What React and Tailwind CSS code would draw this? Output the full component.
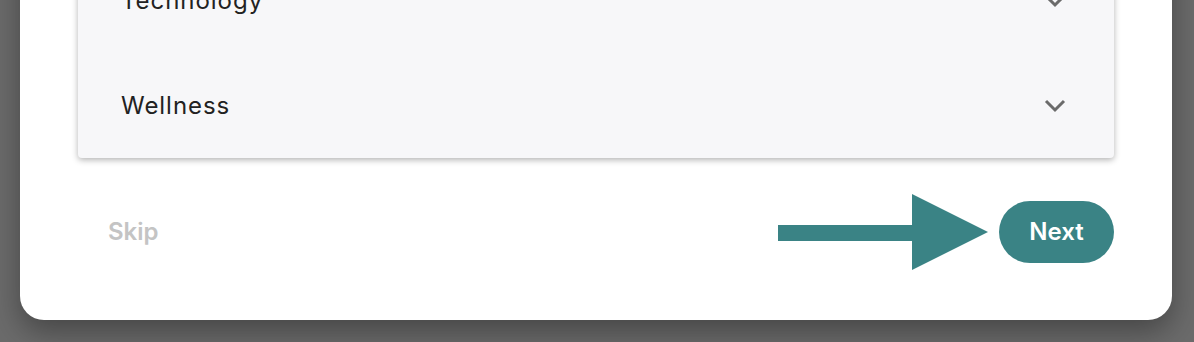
import React from 'react';

const Chevron = () => (
  <svg width="22" height="14" viewBox="0 0 22 14" fill="none" className="shrink-0">
    <polyline points="2,2 11,11 20,2" stroke="#6b6b6b" strokeWidth="3" />
  </svg>
);

const Row = ({ label }) => (
  <div className="flex h-[105px] items-center justify-between pl-[43px] pr-[48px]">
    <span className="text-[24px] tracking-[0.04em] text-[#222222]">{label}</span>
    <Chevron />
  </div>
);

const Arrow = () => (
  <svg width="210" height="76" viewBox="0 0 210 76" className="shrink-0">
    <rect x="0" y="31" width="135" height="16" fill="#3a8385" />
    <polygon points="134,0 210,38 134,76" fill="#3a8385" />
  </svg>
);

export default function App() {
  return (
    <div
      className="h-[342px] overflow-hidden bg-[#6b6b6b] pl-5 pr-[22px]"
      style={{ fontFamily: 'Inter, "Open Sans", sans-serif' }}
    >
      <div className="-mt-[52px] rounded-b-[24px] bg-white px-[58px] pb-[50px] shadow-[0_12px_30px_rgba(0,0,0,0.35)]">
        {/* Accordion */}
        <div className="rounded-b-[4px] bg-[#f7f7f9] shadow-[0_2px_6px_rgba(0,0,0,0.3)]">
          <Row label="Technology" />
          <Row label="Wellness" />
        </div>

        {/* Footer */}
        <div className="mt-[36px] flex items-center justify-between">
          <button className="ml-[30px] text-[24px] font-semibold text-[#c4c4c4]">Skip</button>
          <div className="flex items-center gap-[11px]">
            <Arrow />
            <button className="flex h-[62px] w-[115px] items-center justify-center rounded-full bg-[#3a8385] text-[24px] font-semibold text-white">
              Next
            </button>
          </div>
        </div>
      </div>
    </div>
  );
}
